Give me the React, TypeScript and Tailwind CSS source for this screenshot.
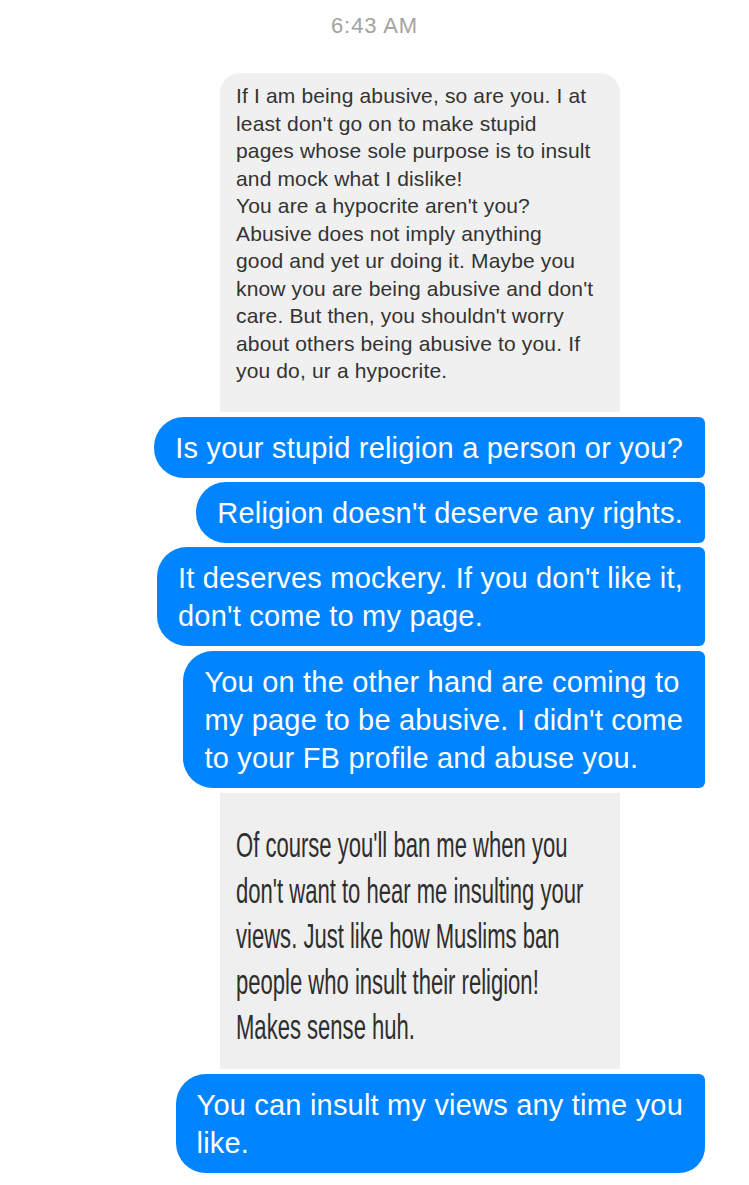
const grayLines = [
  "If I am being abusive, so are you. I at",
  "least don't go on to make stupid",
  "pages whose sole purpose is to insult",
  "and mock what I dislike!",
  "You are a hypocrite aren't you?",
  "Abusive does not imply anything",
  "good and yet ur doing it. Maybe you",
  "know you are being abusive and don't",
  "care. But then, you shouldn't worry",
  "about others being abusive to you. If",
  "you do, ur a hypocrite.",
];

const reply = [
  "Of course you'll ban me when you",
  "don't want to hear me insulting your",
  "views. Just like how Muslims ban",
  "people who insult their religion!",
  "Makes sense huh.",
];

function Blue({ lines, last, className }: { lines: string[]; last?: boolean; className?: string }) {
  return (
    <div
      className={`self-end bg-[#0084ff] text-white text-[29px] leading-[38px] tracking-[0.2px] pl-[21px] pr-[22px] pt-3 pb-[11px] whitespace-nowrap rounded-l-[30px] rounded-tr-[6px] ${
        last ? "rounded-br-[26px]" : "rounded-br-[6px]"
      } ${className ?? ""}`}
    >
      {lines.map((l, i) => (
        <div key={i}>{l}</div>
      ))}
    </div>
  );
}

export default function App() {
  return (
    <div className="w-full min-h-[1185px] bg-white font-['Liberation_Sans',Arial,sans-serif] flex flex-col pr-[44px]">
      <div className="pt-3 text-center text-[22px] leading-[28px] tracking-[0.9px] text-[#a3a3a3] pl-[44px]">
        6:43 AM
      </div>

      <div className="mt-[33px] ml-[220px] w-[400px] h-[339px] bg-[#f0f0f0] rounded-t-[20px] pl-4 pt-[9px] text-[21px] leading-[27.5px] tracking-[0.15px] text-[#333] whitespace-nowrap">
        {grayLines.map((l, i) => (
          <div key={i}>{l}</div>
        ))}
      </div>

      <Blue className="mt-[5px]" lines={["Is your stupid religion a person or you?"]} />
      <Blue className="mt-1" lines={["Religion doesn't deserve any rights."]} />
      <Blue className="mt-1" lines={["It deserves mockery. If you don't like it,", "don't come to my page."]} />
      <Blue
        className="mt-[5px]"
        lines={[
          "You on the other hand are coming to",
          "my page to be abusive. I didn't come",
          "to your FB profile and abuse you.",
        ]}
      />

      <div className="mt-[5px] ml-[220px] w-[400px] h-[276px] bg-[#efefef] pl-4 pt-[29px] overflow-hidden">
        <div className="origin-left scale-x-[0.63] text-[35px] leading-[45.5px] text-[#2e2e2e] whitespace-nowrap">
          {reply.map((l, i) => (
            <div key={i}>{l}</div>
          ))}
        </div>
      </div>

      <Blue className="mt-[5px]" last lines={["You can insult my views any time you", "like."]} />
    </div>
  );
}
